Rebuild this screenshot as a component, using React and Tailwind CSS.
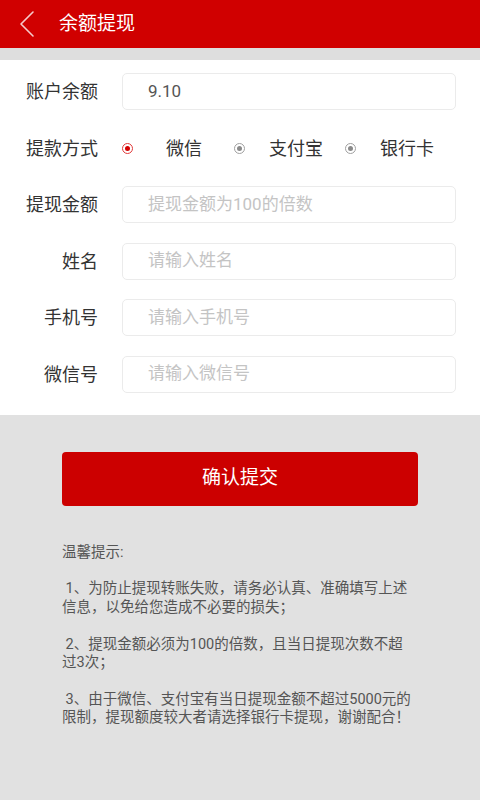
import React from "react";

const font = { fontFamily: 'Roboto, "Noto Sans CJK SC", sans-serif' };

function Radio({ active }) {
  return (
    <span
      className={`flex h-[11px] w-[11px] shrink-0 items-center justify-center rounded-full border-[1.5px] ${
        active ? "border-[#e23a3a]" : "border-[#a0a0a0]"
      }`}
    >
      <span
        className={`h-[5px] w-[5px] rounded-full ${active ? "bg-[#d40000]" : "bg-[#8a8a8a]"}`}
      />
    </span>
  );
}

function Row({ label, children }) {
  return (
    <div className="flex h-[37px] items-center">
      <div className="w-[98px] shrink-0 text-right text-[18px] text-[#333]">{label}</div>
      <div className="ml-[24px] flex h-full flex-1 items-center">{children}</div>
    </div>
  );
}

function Field({ value, placeholder }) {
  return (
    <div className="mr-[24px] flex h-[37px] flex-1 items-center rounded-[5px] border border-[#ebebeb] bg-white pl-[25px] text-[17px]">
      {value ? (
        <span className="text-[#555]">{value}</span>
      ) : (
        <span className="text-[#c4c4c4]">{placeholder}</span>
      )}
    </div>
  );
}

export default function App() {
  return (
    <div className="flex min-h-[800px] w-[480px] flex-col bg-[#e1e1e1]" style={font}>
      <div className="flex h-[48px] items-center bg-[#d00000]">
        <svg className="ml-[19px]" width="16" height="28" viewBox="0 0 16 28" fill="none">
          <path d="M14 2 L2 14 L14 26" stroke="#f6caca" strokeWidth="1.6" strokeLinecap="round" strokeLinejoin="round" />
        </svg>
        <span className="ml-[24px] text-[19px] text-white">余额提现</span>
      </div>
      <div className="h-[12px] bg-[#dedede]" />
      <div className="flex flex-col gap-[19.5px] bg-white pb-[22px] pt-[13px]">
        <Row label="账户余额">
          <Field value="9.10" />
        </Row>
        <Row label="提款方式">
          <div className="flex items-center text-[18px] text-[#333]">
            <Radio active />
            <span className="ml-[33px]">微信</span>
            <span className="ml-[32px]"><Radio /></span>
            <span className="ml-[24px]">支付宝</span>
            <span className="ml-[22px]"><Radio /></span>
            <span className="ml-[24px]">银行卡</span>
          </div>
        </Row>
        <Row label="提现金额">
          <Field placeholder="提现金额为100的倍数" />
        </Row>
        <Row label="姓名">
          <Field placeholder="请输入姓名" />
        </Row>
        <Row label="手机号">
          <Field placeholder="请输入手机号" />
        </Row>
        <Row label="微信号">
          <Field placeholder="请输入微信号" />
        </Row>
      </div>
      <div className="mx-[62px] mt-[37px] flex h-[54px] items-center justify-center rounded-[4px] bg-[#cc0000] text-[19px] text-white">
        确认提交
      </div>
      <div className="mx-[62px] mt-[38px] whitespace-nowrap text-[14.5px] leading-[18.4px] text-[#555]">
        <div>温馨提示:</div>
        <div className="h-[18.4px]" />
        <div>&nbsp;1、为防止提现转账失败，请务必认真、准确填写上述</div>
        <div>信息，以免给您造成不必要的损失；</div>
        <div className="h-[18.4px]" />
        <div>&nbsp;2、提现金额必须为100的倍数，且当日提现次数不超</div>
        <div>过3次；</div>
        <div className="h-[18.4px]" />
        <div>&nbsp;3、由于微信、支付宝有当日提现金额不超过5000元的</div>
        <div>限制，提现额度较大者请选择银行卡提现，谢谢配合！</div>
      </div>
    </div>
  );
}
